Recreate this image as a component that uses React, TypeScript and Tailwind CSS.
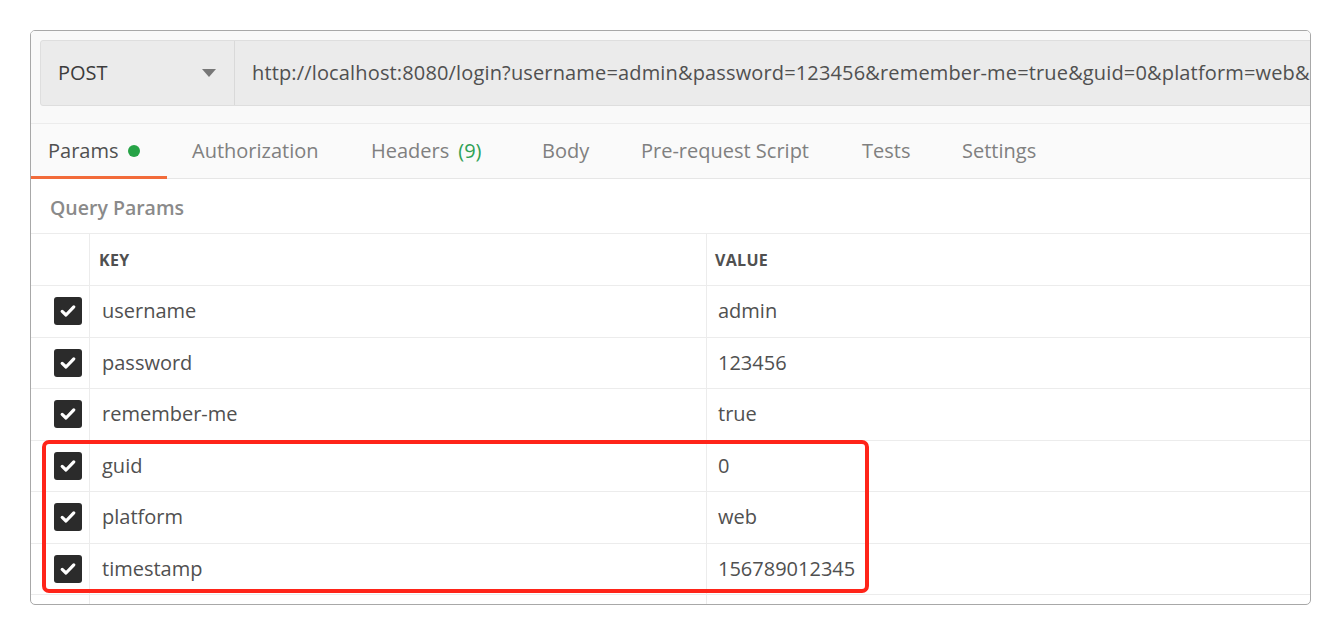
import React from "react";

const rows = [
  ["username", "admin"],
  ["password", "123456"],
  ["remember-me", "true"],
  ["guid", "0"],
  ["platform", "web"],
  ["timestamp", "156789012345"],
];

function Check() {
  return (
    <div className="w-[28px] h-[28px] rounded-[3px] bg-[#2b2b2b] flex items-center justify-center">
      <svg width="18" height="18" viewBox="0 0 18 18">
        <path d="M3.2 9.4 L7 13 L14.8 4.9" fill="none" stroke="white" strokeWidth="3.2" strokeLinecap="round" strokeLinejoin="round" />
      </svg>
    </div>
  );
}

export default function App() {
  return (
    <div
      className="w-[1341px] h-[636px] bg-white pt-[30px] pl-[30px]"
      style={{ fontFamily: '"Open Sans", "Noto Sans", sans-serif' }}
    >
      <div className="relative w-[1281px] h-[575px] border border-[#a8a8a8] rounded-[5px] overflow-hidden bg-white">
        {/* top */}
        <div className="bg-[#f9f9f9] pt-[9px] pl-[9px] h-[93px] border-b border-[#ececec]">
          <div className="flex h-[66px] w-[1400px] bg-[#ebebeb] border border-[#dedede] rounded-[3px]">
            <div className="w-[194px] shrink-0 flex items-center justify-between pl-[17px] pr-[18px] border-r border-[#d9d9d9]">
              <span className="text-[20px] text-[#3c3c3c]">POST</span>
              <svg width="14" height="9" viewBox="0 0 14 9">
                <path d="M0 0 H14 L7 8 Z" fill="#777" />
              </svg>
            </div>
            <div className="flex items-center pl-[17px] text-[20px] tracking-[0.15px] text-[#505050] whitespace-nowrap">
              http://localhost:8080/login?username=admin&amp;password=123456&amp;remember-me=true&amp;guid=0&amp;platform=web&amp;
            </div>
          </div>
        </div>
        {/* tabs */}
        <div className="flex h-[55px] bg-[#fafafa] border-b border-[#e6e6e6] text-[20px] text-[#808080]">
          <div className="relative flex items-center pl-[17px] w-[136px] text-[#505050]">
            Params
            <span className="ml-[10px] w-[12px] h-[12px] rounded-full bg-[#26a346]" />
            <div className="absolute left-0 right-0 bottom-[-1px] h-[3px] bg-[#f26b3a]" />
          </div>
          <div className="flex items-center ml-[25px] w-[179px]">Authorization</div>
          <div className="flex items-center w-[171px]">
            Headers <span className="ml-[9px] text-[#2fa155]">(9)</span>
          </div>
          <div className="flex items-center w-[99px]">Body</div>
          <div className="flex items-center w-[221px]">Pre-request Script</div>
          <div className="flex items-center w-[100px]">Tests</div>
          <div className="flex items-center">Settings</div>
        </div>
        {/* query params */}
        <div className="h-[55px] flex items-center pl-[19px] pt-[4px] text-[19.5px] font-semibold text-[#8a8a8a] border-b border-[#ececec]">
          Query Params
        </div>
        {/* table */}
        <div className="flex h-[52px] border-b border-[#ececec] text-[16px] tracking-[0.3px] font-bold text-[#505050]">
          <div className="w-[59px] shrink-0 border-r border-[#ececec]" />
          <div className="w-[617px] shrink-0 border-r border-[#ececec] flex items-center pl-[9px]">KEY</div>
          <div className="flex-1 flex items-center pl-[8px]">VALUE</div>
        </div>
        {rows.map(([k, v]) => (
          <div key={k} className="flex h-[51.5px] border-b border-[#ececec] text-[20px] text-[#505050]">
            <div className="w-[59px] shrink-0 border-r border-[#ececec] flex items-center pl-[23px]">
              <Check />
            </div>
            <div className="w-[617px] shrink-0 border-r border-[#ececec] flex items-center pl-[12px]">{k}</div>
            <div className="flex-1 flex items-center pl-[11px]">{v}</div>
          </div>
        ))}
        <div className="flex h-[51.5px] border-b border-[#ececec]">
          <div className="w-[59px] shrink-0 border-r border-[#ececec]" />
          <div className="w-[617px] shrink-0 border-r border-[#ececec]" />
          <div className="flex-1" />
        </div>
        {/* highlight */}
        <div className="absolute left-[11px] top-[409px] w-[827px] h-[153px] border-[4px] border-[#ff2419] rounded-[7px] pointer-events-none" />
      </div>
    </div>
  );
}
